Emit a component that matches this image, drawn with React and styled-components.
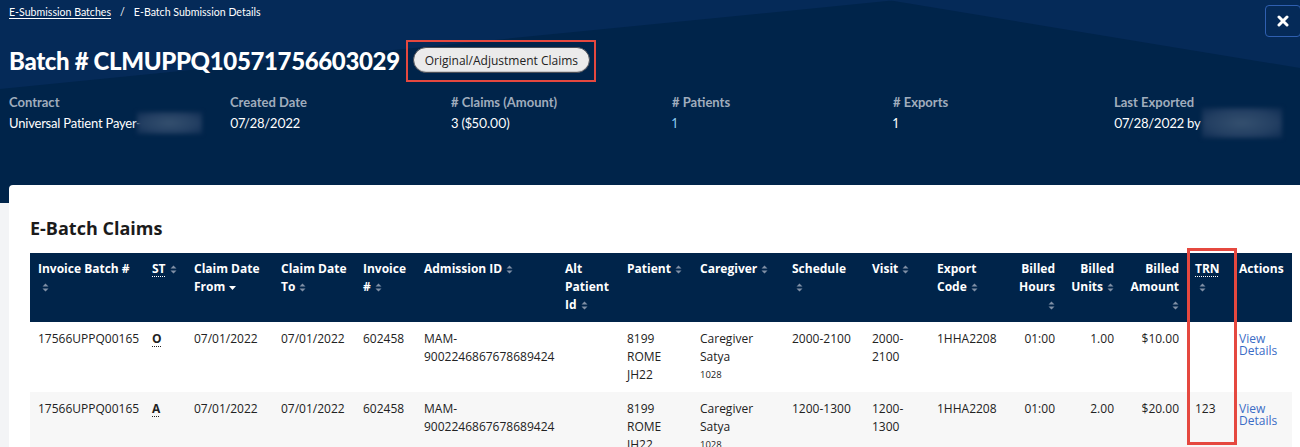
import React from "react";
import styled, { createGlobalStyle } from "styled-components";

const Global = createGlobalStyle`
  html, body { margin: 0; padding: 0; }
  body {
    background: #f3f4f6;
    font-family: "Open Sans", "Noto Sans", sans-serif;
    color: #212529;
    overflow: hidden;
  }
`;

const Page = styled.div`
  width: 1300px;
  min-height: 447px;
  background: #f3f4f6;
`;

const Hero = styled.header`
  position: relative;
  height: 203px;
  background: #00244a;
  padding: 5px 0 0 9px;
  box-sizing: border-box;
  font-family: "Lato", "Open Sans", sans-serif;
  overflow: hidden;
  &::before, &::after {
    content: "";
    position: absolute;
    inset: 0;
    background: #052a58;
    pointer-events: none;
  }
  &::before { clip-path: polygon(0 0, 69% 0, 0 89px); }
  &::after { clip-path: polygon(68.3% 0, 100% 0, 100% 68px); }
`;

const HeroInner = styled.div`
  position: relative;
  z-index: 1;
`;

const Crumbs = styled.nav`
  display: flex;
  align-items: center;
  gap: 9px;
  font-size: 10.6px;
  line-height: 14px;
  color: #fff;
`;

const CrumbLink = styled.a`
  color: #fff;
  text-decoration: underline;
  text-underline-offset: 2px;
`;

const TitleRow = styled.div`
  display: flex;
  align-items: center;
  gap: 6px;
  margin-top: 21px;
`;

const Title = styled.h1`
  margin: 0;
  font-size: 24px;
  line-height: 32px;
  font-weight: 900;
  color: #fff;
  letter-spacing: -0.35px;
`;

const Highlight = styled.div`
  border: 2px solid #e5483f;
  padding: 5px 4px 7px 5px;
  display: flex;
`;

const Pill = styled.button`
  height: 26px;
  padding: 0 11px;
  border-radius: 13px;
  border: 1px solid #4b4f57;
  background: #ebebeb;
  box-shadow: inset 0 -1px 0 rgba(0,0,0,0.15);
  font-family: "Open Sans", sans-serif;
  font-size: 12px;
  color: #222;
  cursor: pointer;
`;

const Info = styled.div`
  display: grid;
  grid-template-columns: repeat(6, 221px);
  margin-top: 11px;
`;

const Label = styled.div`
  font-size: 13px;
  line-height: 18px;
  font-weight: 700;
  color: #a0adbd;
  margin-bottom: 3px;
`;

const Value = styled.div`
  font-size: 13px;
  line-height: 18px;
  height: 18px;
  font-variant-numeric: proportional-nums;
  letter-spacing: -0.2px;
  color: ${(p) => (p.$link ? "#8ccbf0" : "#fff")};
  display: flex;
  align-items: center;
  white-space: nowrap;
`;

const Blur = styled.span`
  display: inline-block;
  flex: none;
  width: ${(p) => p.$w}px;
  height: ${(p) => p.$h}px;
  margin-left: ${(p) => p.$ml || 0}px;
  background: radial-gradient(ellipse at center, #35506f 0%, #233f62 60%, #0d2c52 100%);
  filter: blur(2px);
`;

const Close = styled.button`
  position: absolute;
  top: 5px;
  right: -1px;
  width: 36px;
  height: 32px;
  border: 1px solid #2f5fb0;
  border-radius: 4px;
  background: transparent;
  display: flex;
  align-items: center;
  justify-content: center;
  z-index: 2;
  padding: 0;
`;

const Card = styled.main`
  position: relative;
  margin: -18px 0 0 9px;
  background: #fff;
  border-radius: 4px 0 0 0;
  padding: 31px 0 0 21px;
  min-height: 262px;
  box-sizing: border-box;
`;

const CardTitle = styled.h2`
  margin: 0 0 13px;
  font-size: 18px;
  line-height: 24px;
  font-weight: 700;
  color: #1b1b1b;
`;

const TableWrap = styled.div`
  position: relative;
  width: 1262px;
`;

const Table = styled.table`
  width: 1262px;
  table-layout: fixed;
  border-collapse: collapse;
  font-size: 12px;
`;

const Th = styled.th`
  background: #00244a;
  color: #fff;
  font-weight: 700;
  line-height: 18px;
  padding: 7px 8px 8px;
  vertical-align: top;
  text-align: ${(p) => (p.$right ? "right" : "left")};
`;

const Tr = styled.tr`
  background: ${(p) => (p.$alt ? "#f7f7f7" : "#fff")};
`;

const Td = styled.td`
  line-height: 18px;
  padding: 8px 8px 8px;
  vertical-align: top;
  color: #222;
  text-align: ${(p) => (p.$right ? "right" : "left")};
`;

const Abbr = styled.span`
  font-weight: 700;
  text-decoration: underline dotted;
  text-underline-offset: 3px;
  text-decoration-thickness: 1px;
`;

const Small = styled.div`
  font-size: 9.5px;
  line-height: 18px;
`;

const Link = styled.a`
  display: inline-block;
  color: #3a6cc6;
  line-height: 12px;
  margin-top: 3px;
  text-decoration: none;
`;

const Annotation = styled.div`
  position: absolute;
  left: 1157px;
  top: -5px;
  width: 50px;
  height: 197px;
  border: 3px solid #e5483f;
  box-sizing: border-box;
  pointer-events: none;
`;

const SortIcon = () => (
  <svg width="7" height="9" viewBox="0 0 7 9" style={{ marginLeft: 4, verticalAlign: "-1px" }}>
    <path d="M0.5 3.6 L3.5 0.6 L6.5 3.6 Z M0.5 5.4 L3.5 8.4 L6.5 5.4 Z" fill="#8090a6" />
  </svg>
);

const SortDown = () => (
  <svg width="7" height="4" viewBox="0 0 7 4" style={{ marginLeft: 4, verticalAlign: "1px" }}>
    <path d="M0 0 L7 0 L3.5 4 Z" fill="#fff" />
  </svg>
);

const widths = [114, 42, 87, 82, 61, 141, 62, 73, 92, 80, 65, 76, 58, 59, 65, 44, 61];

const rows = [
  { batch: "17566UPPQ00165", st: "O", from: "07/01/2022", to: "07/01/2022", inv: "602458", sched: "2000-2100", visit: "2000-2100", hours: "01:00", units: "1.00", amt: "$10.00", trn: "" },
  { batch: "17566UPPQ00165", st: "A", from: "07/01/2022", to: "07/01/2022", inv: "602458", sched: "1200-1300", visit: "1200-1300", hours: "01:00", units: "2.00", amt: "$20.00", trn: "123" },
];

export default function App() {
  return (
    <Page>
      <Global />
      <Hero>
        <HeroInner>
          <Crumbs>
            <CrumbLink href="#">E-Submission Batches</CrumbLink>
            <span>/</span>
            <span>E-Batch Submission Details</span>
          </Crumbs>
          <TitleRow>
            <Title>Batch # CLMUPPQ10571756603029</Title>
            <Highlight>
              <Pill>Original/Adjustment Claims</Pill>
            </Highlight>
          </TitleRow>
          <Info>
            <div>
              <Label>Contract</Label>
              <Value>Universal Patient Payer-<Blur $w={65} $h={22} $ml={-4} /></Value>
            </div>
            <div>
              <Label>Created Date</Label>
              <Value>07/28/2022</Value>
            </div>
            <div>
              <Label># Claims (Amount)</Label>
              <Value>3 ($50.00)</Value>
            </div>
            <div>
              <Label># Patients</Label>
              <Value $link>1</Value>
            </div>
            <div>
              <Label># Exports</Label>
              <Value>1</Value>
            </div>
            <div>
              <Label>Last Exported</Label>
              <Value>07/28/2022 by<Blur $w={80} $h={30} $ml={2} /></Value>
            </div>
          </Info>
        </HeroInner>
        <Close aria-label="Close">
          <svg width="12" height="12" viewBox="0 0 12 12">
            <path d="M2 2 L10 10 M10 2 L2 10" stroke="#fff" strokeWidth="3" strokeLinecap="round" />
          </svg>
        </Close>
      </Hero>
      <Card>
        <CardTitle>E-Batch Claims</CardTitle>
        <TableWrap>
          <Table>
            <colgroup>
              {widths.map((w, i) => (
                <col key={i} style={{ width: w }} />
              ))}
            </colgroup>
            <thead>
              <tr>
                <Th>Invoice Batch #<SortIcon /></Th>
                <Th><Abbr>ST</Abbr><SortIcon /></Th>
                <Th>Claim Date From<SortDown /></Th>
                <Th>Claim Date To<SortIcon /></Th>
                <Th>Invoice #<SortIcon /></Th>
                <Th>Admission ID<SortIcon /></Th>
                <Th>Alt Patient Id<SortIcon /></Th>
                <Th>Patient<SortIcon /></Th>
                <Th>Caregiver<SortIcon /></Th>
                <Th>Schedule<SortIcon /></Th>
                <Th>Visit<SortIcon /></Th>
                <Th>Export Code<SortIcon /></Th>
                <Th $right>Billed Hours<SortIcon /></Th>
                <Th $right>Billed Units<SortIcon /></Th>
                <Th $right>Billed Amount<SortIcon /></Th>
                <Th><Abbr>TRN</Abbr><SortIcon /></Th>
                <Th>Actions</Th>
              </tr>
            </thead>
            <tbody>
              {rows.map((r, i) => (
                <Tr key={i} $alt={i % 2 === 1}>
                  <Td>{r.batch}</Td>
                  <Td><Abbr>{r.st}</Abbr></Td>
                  <Td>{r.from}</Td>
                  <Td>{r.to}</Td>
                  <Td>{r.inv}</Td>
                  <Td>MAM-9002246867678689424</Td>
                  <Td></Td>
                  <Td>8199 ROME JH22</Td>
                  <Td>
                    Caregiver Satya
                    <Small>1028</Small>
                  </Td>
                  <Td>{r.sched}</Td>
                  <Td>{r.visit}</Td>
                  <Td>1HHA2208</Td>
                  <Td $right>{r.hours}</Td>
                  <Td $right>{r.units}</Td>
                  <Td $right>{r.amt}</Td>
                  <Td>{r.trn}</Td>
                  <Td><Link href="#">View Details</Link></Td>
                </Tr>
              ))}
            </tbody>
          </Table>
          <Annotation />
        </TableWrap>
      </Card>
    </Page>
  );
}
